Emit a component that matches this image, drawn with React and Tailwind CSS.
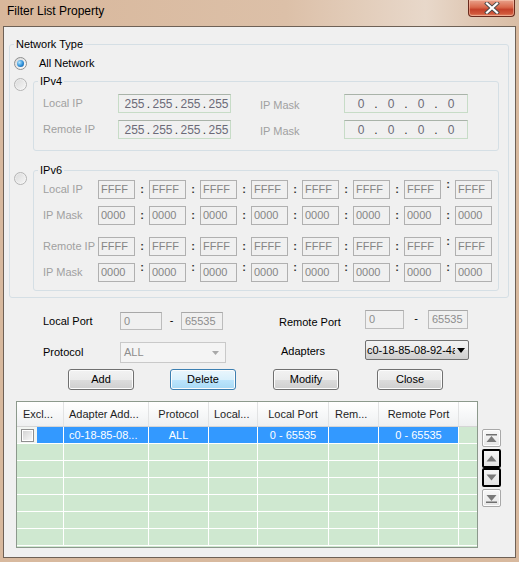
import React from "react";

// Win7 style "Filter List Property" dialog

const btnBase =
  "flex h-[21px] w-[66px] items-center justify-center rounded-[3px] border text-[11px] text-black shadow-[inset_0_0_0_1px_#fcfcfc]";
const btnNormal =
  "border-[#707070] bg-[linear-gradient(#f2f2f2_0%,#ebebeb_50%,#dddddd_50%,#cfcfcf_100%)]";
const btnActive =
  "border-[#3c7fb1] bg-[linear-gradient(#eaf6fd_0%,#d9f0fc_50%,#bee6fd_50%,#a7d9f5_100%)]";

function Radio({ checked, disabled }) {
  return (
    <span
      className={
        disabled
          ? "flex h-[13px] w-[13px] shrink-0 items-center justify-center rounded-full border border-[#b4b4b4] bg-[linear-gradient(135deg,#e6e6e6,#fafafa)]"
          : "flex h-[13px] w-[13px] shrink-0 items-center justify-center rounded-full border border-[#8e8f8f] bg-[linear-gradient(135deg,#d6d6d6,#ffffff)]"
      }
    >
      {checked ? (
        <span className="h-[7px] w-[7px] rounded-full bg-[radial-gradient(circle_at_35%_35%,#b4e6ff,#2c8ed8_55%,#164f8c)]" />
      ) : (
        <span className="h-[9px] w-[9px] rounded-full bg-[linear-gradient(135deg,#dcdcdc,#f4f4f4)]" />
      )}
    </span>
  );
}

function GroupBox({ label, className, children }) {
  return (
    <div className={`relative rounded-[3px] border border-[#d5dfe5] ${className}`}>
      <span className="absolute -top-[8px] left-[4px] bg-[#f0f0f0] px-[2px] text-[11px] leading-[14px] text-black">
        {label}
      </span>
      {children}
    </div>
  );
}

function Ip4Box({ parts, wide }) {
  return (
    <div
      className={
        wide
          ? "flex h-[19px] w-[124px] items-center border border-[#c7dcc7] border-t-[#a9b3a9] bg-[#f0f0f0] pl-[4px] text-[12px] text-[#6c6a78]"
          : "flex h-[19px] w-[113px] items-center border border-[#c7dcc7] border-t-[#a9b3a9] bg-[#f0f0f0] pl-[5px] text-[12px] text-[#6c6a78]"
      }
    >
      {parts.map((p, i) => (
        <React.Fragment key={i}>
          <span className={wide ? "w-[24px] shrink-0 text-center" : "w-[21px] shrink-0 text-center"}>{p}</span>
          {i < 3 && (
            <span className={wide ? "w-[6px] shrink-0 text-center text-[#333]" : "w-[7px] shrink-0 text-center text-[#333]"}>
              .
            </span>
          )}
        </React.Fragment>
      ))}
    </div>
  );
}

function Ip6Row({ label, value, raised, className }) {
  return (
    <div className={`flex h-[19px] items-center pl-[9px] ${className}`}>
      <span className="w-[55px] whitespace-nowrap text-[11px] text-[#a0a0a0]">{label}</span>
      {Array.from({ length: 8 }).map((_, i) => (
        <React.Fragment key={i}>
          <div className="flex h-[19px] w-[37px] items-center border border-[#b0b0b0] bg-[#f0f0f0] pl-[2px] text-[11px] text-[#858585]">
            {value}
          </div>
          {i < 7 && (
            <span
              className={
                raised[i]
                  ? "w-[14px] -translate-y-[5px] text-center text-[11px] font-bold text-[#333]"
                  : "w-[14px] text-center text-[11px] font-bold text-[#333]"
              }
            >
              :
            </span>
          )}
        </React.Fragment>
      ))}
    </div>
  );
}

function PortBox({ value, className }) {
  return (
    <div
      className={`flex items-center border border-[#bcbcbc] border-t-[#a8a8a8] bg-[#f0f0f0] pl-[3px] text-[11px] text-[#8d8d8d] ${className}`}
    >
      {value}
    </div>
  );
}

function ScrollBtn({ kind, dark }) {
  return (
    <div
      className={
        dark
          ? "flex h-[19px] w-[19px] items-center justify-center rounded-[2px] border-2 border-black bg-[linear-gradient(#f6f6f6,#e2e2e2)]"
          : "flex h-[18px] w-[19px] items-center justify-center rounded-[2px] border border-[#a8a8a8] bg-[linear-gradient(#f8f8f8,#e6e6e6)] shadow-[inset_0_0_0_1px_#fdfdfd]"
      }
    >
      <svg width="13" height="11" viewBox="0 0 13 11">
        {kind === "top" && (
          <>
            <rect x="1" y="1" width="11" height="1.5" fill="#707070" />
            <path d="M6.5 3 L11.5 9 L1.5 9 Z" fill="#7a7a7a" />
          </>
        )}
        {kind === "up" && <path d="M6.5 2.5 L11.5 8.5 L1.5 8.5 Z" fill="#7a7a7a" />}
        {kind === "down" && <path d="M6.5 8.5 L11.5 2.5 L1.5 2.5 Z" fill="#7a7a7a" />}
        {kind === "bottom" && (
          <>
            <path d="M6.5 8 L11.5 2 L1.5 2 Z" fill="#7a7a7a" />
            <rect x="1" y="8.5" width="11" height="1.5" fill="#707070" />
          </>
        )}
      </svg>
    </div>
  );
}

const colW = [
  "w-[47px]",
  "w-[85px]",
  "w-[60px]",
  "w-[49px]",
  "w-[71px]",
  "w-[50px]",
  "w-[80px]",
];

const headers = [
  { t: "Excl...", c: "pl-[6px]" },
  { t: "Adapter Add...", c: "pl-[5px]" },
  { t: "Protocol", c: "justify-center" },
  { t: "Local...", c: "pl-[5px]" },
  { t: "Local Port", c: "justify-center" },
  { t: "Rem...", c: "pl-[6px]" },
  { t: "Remote Port", c: "justify-center" },
];

export default function App() {
  return (
    <div className="flex h-[562px] w-[519px] flex-col overflow-hidden bg-[#d8b99e] font-['Liberation_Sans',Arial,sans-serif]">
      {/* title bar */}
      <div className="flex h-[26px] shrink-0 items-start bg-[linear-gradient(90deg,#d8b79b_0%,#dcc0a8_55%,#e8d8ca_82%,#e0cab7_90%,#d9bda5_100%)]">
        <span className="ml-[7px] mt-[4px] text-[12px] leading-[14px] text-black">Filter List Property</span>
        <div className="ml-auto mr-[4px] flex h-[17px] w-[47px] items-center justify-center rounded-b-[4px] border border-t-0 border-[#6a2a1c] bg-[linear-gradient(#e9a28c_0%,#d9694c_45%,#c4412a_60%,#d0583b_85%,#e48a6a_100%)] shadow-[inset_0_0_0_1px_rgba(255,220,200,0.45)]">
          <svg width="16" height="12" viewBox="0 0 16 12">
            <path d="M3 1.5 L13 10.5 M13 1.5 L3 10.5" stroke="#4a4a4a" strokeWidth="4" strokeLinecap="square" />
            <path d="M3 1.5 L13 10.5 M13 1.5 L3 10.5" stroke="#ffffff" strokeWidth="2.2" strokeLinecap="square" />
          </svg>
        </div>
      </div>

      {/* client area */}
      <div className="mx-[3px] flex h-[532px] shrink-0 flex-col border border-[#6e6156] bg-[#f0f0f0] text-[11px] text-black">
        <GroupBox label="Network Type" className="ml-[5px] mt-[17px] h-[254px] w-[500px] shrink-0">
          <div className="flex flex-col">
            <div className="mt-[11px] flex h-[14px] items-center">
              <span className="ml-[4px]">
                <Radio checked />
              </span>
              <span className="ml-[12px] leading-[14px]">All Network</span>
            </div>

            {/* IPv4 */}
            <div className="mt-[11px] flex items-start">
              <span className="ml-[4px] -mt-[3px]">
                <Radio disabled />
              </span>
              <GroupBox label="IPv4" className="ml-[6px] h-[70px] w-[466px]">
                <div className="flex flex-col">
                  <div className="mt-[12px] flex h-[19px] items-center pl-[9px]">
                    <span className="w-[75px] text-[#a0a0a0]">Local IP</span>
                    <Ip4Box parts={["255", "255", "255", "255"]} />
                    <span className="ml-[29px] w-[84px] pt-[4px] text-[#a0a0a0]">IP Mask</span>
                    <Ip4Box wide parts={["0", "0", "0", "0"]} />
                  </div>
                  <div className="mt-[7px] flex h-[19px] items-center pl-[9px]">
                    <span className="w-[75px] text-[#a0a0a0]">Remote IP</span>
                    <Ip4Box parts={["255", "255", "255", "255"]} />
                    <span className="ml-[29px] w-[84px] pt-[4px] text-[#a0a0a0]">IP Mask</span>
                    <Ip4Box wide parts={["0", "0", "0", "0"]} />
                  </div>
                </div>
              </GroupBox>
            </div>

            {/* IPv6 */}
            <div className="mt-[19px] flex items-start">
              <span className="ml-[4px] mt-[2px]">
                <Radio disabled />
              </span>
              <GroupBox label="IPv6" className="ml-[6px] h-[121px] w-[466px]">
                <div className="flex flex-col">
                  <Ip6Row
                    className="mt-[9px]"
                    label="Local IP"
                    value="FFFF"
                    raised={[false, false, false, false, false, false, true]}
                  />
                  <Ip6Row
                    className="mt-[7px]"
                    label="IP Mask"
                    value="0000"
                    raised={[false, false, false, false, false, false, false]}
                  />
                  <Ip6Row
                    className="mt-[12px]"
                    label="Remote IP"
                    value="FFFF"
                    raised={[false, false, false, false, false, false, true]}
                  />
                  <Ip6Row
                    className="mt-[7px]"
                    label="IP Mask"
                    value="0000"
                    raised={[true, true, true, true, true, true, true]}
                  />
                </div>
              </GroupBox>
            </div>
          </div>
        </GroupBox>

        {/* ports */}
        <div className="mt-[12px] flex h-[20px] shrink-0 items-start">
          <span className="ml-[39px] mt-[4px] w-[77px] leading-[14px]">Local Port</span>
          <PortBox value="0" className="mt-[2px] h-[18px] w-[42px]" />
          <span className="mt-[3px] w-[19px] text-center leading-[14px]">-</span>
          <PortBox value="65535" className="mt-[2px] h-[18px] w-[42px]" />
          <span className="ml-[56px] mt-[5px] w-[86px] leading-[14px]">Remote Port</span>
          <PortBox value="0" className="h-[19px] w-[39px]" />
          <span className="mt-[1px] w-[24px] text-center leading-[14px]">-</span>
          <PortBox value="65535" className="h-[19px] w-[40px]" />
        </div>

        {/* protocol / adapters */}
        <div className="mt-[10px] flex h-[22px] shrink-0 items-start">
          <span className="ml-[39px] mt-[5px] w-[77px] leading-[14px]">Protocol</span>
          <div className="mt-[2px] flex h-[21px] w-[106px] items-center border border-[#c9c9c9] bg-[#f4f4f4] pl-[3px] text-[#8d8d8d]">
            <span>ALL</span>
            <svg className="ml-auto mr-[6px]" width="7" height="4" viewBox="0 0 7 4">
              <path d="M0 0 L7 0 L3.5 4 Z" fill="#a8a8a8" />
            </svg>
          </div>
          <span className="ml-[55px] mt-[4px] w-[84px] leading-[14px]">Adapters</span>
          <div className="flex h-[20px] w-[104px] items-center overflow-hidden rounded-[2px] border border-[#707070] bg-[linear-gradient(#f2f2f2_0%,#ebebeb_50%,#dddddd_50%,#cfcfcf_100%)] pl-[1px]">
            <span className="w-[88px] overflow-hidden whitespace-nowrap">c0-18-85-08-92-4a</span>
            <svg className="ml-[2px]" width="8" height="5" viewBox="0 0 8 5">
              <path d="M0 0 L8 0 L4 5 Z" fill="#000" />
            </svg>
          </div>
        </div>

        {/* buttons */}
        <div className="mt-[7px] flex h-[21px] shrink-0 items-start">
          <div className={`${btnBase} ${btnNormal} ml-[64px]`}>Add</div>
          <div className={`${btnBase} ${btnActive} ml-[36px]`}>Delete</div>
          <div className={`${btnBase} ${btnNormal} ml-[37px]`}>Modify</div>
          <div className={`${btnBase} ${btnNormal} ml-[38px]`}>Close</div>
        </div>

        {/* list + scroll buttons */}
        <div className="mt-[11px] flex shrink-0 items-start">
          <div className="ml-[12px] flex h-[147px] w-[462px] flex-col border border-[#8c998c] bg-[#cfe8d0]">
            <div className="flex h-[25px] border-b border-[#d5d5d5] bg-[linear-gradient(#ffffff_0%,#f7f8f9_50%,#eff0f1_100%)] text-[#1e1e1e]">
              {headers.map((h, i) => (
                <div key={i} className={`flex h-full items-center border-r border-[#e2e3e4] ${colW[i]} ${h.c}`}>
                  {h.t}
                </div>
              ))}
              <div className="flex-1" />
            </div>

            {/* selected row */}
            <div className="flex h-[17px] border-b border-white text-white">
              <div className={`flex h-full items-stretch border-r border-white ${colW[0]}`}>
                <div className="flex w-[20px] items-center justify-center bg-[#f2f5f2]">
                  <span className="mt-[1px] flex h-[13px] w-[13px] items-center justify-center border border-[#8f8f8f] bg-white">
                    <span className="h-[9px] w-[9px] bg-[linear-gradient(135deg,#d4d4d4,#f8f8f8)]" />
                  </span>
                </div>
                <div className="flex-1 bg-[#3399ff]" />
              </div>
              <div className={`flex h-full items-center border-r border-white bg-[#3399ff] pl-[5px] ${colW[1]}`}>
                c0-18-85-08...
              </div>
              <div className={`flex h-full items-center justify-center border-r border-white bg-[#3399ff] ${colW[2]}`}>
                ALL
              </div>
              <div className={`h-full border-r border-white bg-[#3399ff] ${colW[3]}`} />
              <div className={`flex h-full items-center justify-center border-r border-white bg-[#3399ff] ${colW[4]}`}>
                0 - 65535
              </div>
              <div className={`h-full border-r border-white bg-[#3399ff] ${colW[5]}`} />
              <div className={`flex h-full items-center justify-center border-r border-white bg-[#3399ff] ${colW[6]}`}>
                0 - 65535
              </div>
              <div className="flex-1" />
            </div>

            {[0, 1, 2, 3, 4, 5].map((r) => (
              <div key={r} className="flex h-[17px] border-b border-white">
                {colW.map((w, i) => (
                  <div key={i} className={`h-full border-r border-white ${w}`} />
                ))}
                <div className="flex-1" />
              </div>
            ))}
          </div>

          <div className="ml-[4px] flex flex-col">
            <div className="mt-[28px]">
              <ScrollBtn kind="top" />
            </div>
            <div className="mt-[2px]">
              <ScrollBtn kind="up" dark />
            </div>
            <ScrollBtn kind="down" dark />
            <div className="mt-[2px]">
              <ScrollBtn kind="bottom" />
            </div>
          </div>
        </div>
      </div>
    </div>
  );
}
